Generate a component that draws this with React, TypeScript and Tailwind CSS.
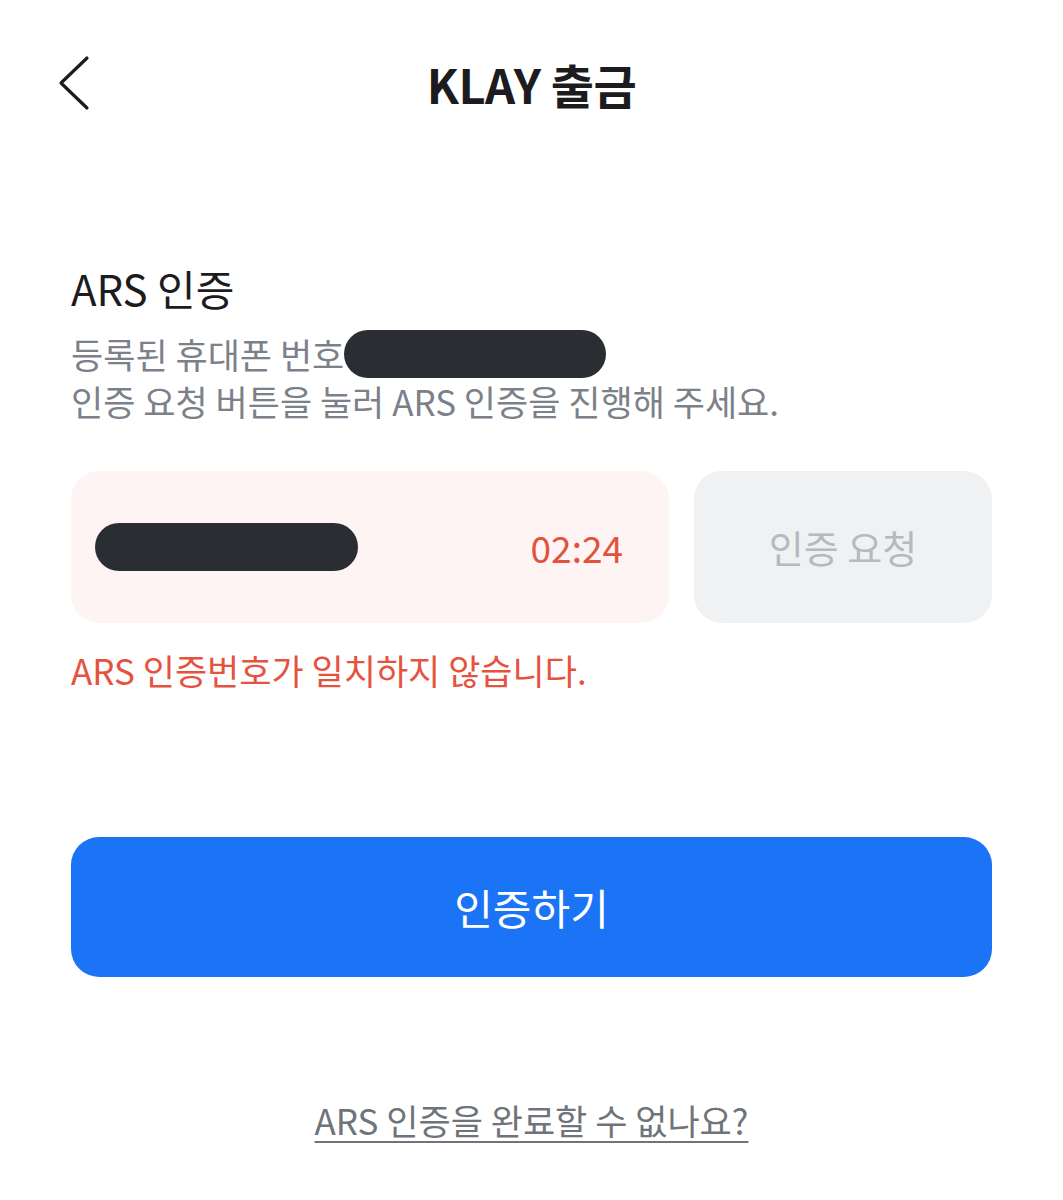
const FONT = { fontFamily: '"Noto Sans CJK KR", "Noto Sans", sans-serif' }

function BackIcon() {
  return (
    <svg width="34" height="56" viewBox="0 0 34 56" fill="none">
      <polyline points="30,3 4,28 30,53" stroke="#1c1c1e" strokeWidth="3.2" strokeLinecap="round" strokeLinejoin="round" />
    </svg>
  )
}

function Redacted({ className }: { className: string }) {
  return <span className={`inline-block shrink-0 rounded-full bg-[#2a2d31] ${className}`} />
}

export default function App() {
  return (
    <div className="min-h-[1200px] w-full bg-white" style={FONT}>
      {/* header */}
      <div className="grid h-[166px] grid-cols-[1fr_auto_1fr] items-center">
        <button className="flex items-center pl-[57px]">
          <BackIcon />
        </button>
        <h1 className="text-[47px] font-bold leading-none tracking-[-0.5px] text-[#1c1c1e]">KLAY 출금</h1>
        <div />
      </div>

      <div className="flex flex-col px-[71px] pt-[98px]">
        <h2 className="text-[42px] leading-[48px] text-[#1c1c1e]">ARS 인증</h2>
        <p className="mt-[18px] text-[35px] leading-[46px] text-[#7c8189]">
          <span className="flex items-center">
            등록된 휴대폰 번호<Redacted className="h-[48px] w-[262px]" />
          </span>
          <span className="block">인증 요청 버튼을 눌러 ARS 인증을 진행해 주세요.</span>
        </p>

        <div className="mt-[47px] flex gap-[25px]">
          <div className="flex h-[152px] flex-1 items-center justify-between rounded-[28px] bg-[#fdf4f3] pl-[24px] pr-[46px]">
            <Redacted className="h-[48px] w-[263px]" />
            <span className="text-[37px] leading-none text-[#e0533f]">02:24</span>
          </div>
          <button className="flex h-[152px] w-[298px] items-center justify-center rounded-[28px] bg-[#f0f1f3] text-[38px] leading-none text-[#b5b9c0]">
            인증 요청
          </button>
        </div>

        <p className="mt-[24px] text-[35px] leading-[46px] text-[#e5533f]">ARS 인증번호가 일치하지 않습니다.</p>

        <button className="mt-[144px] flex h-[140px] items-center justify-center rounded-[28px] bg-[#1a74f5] text-[42px] leading-none text-white">
          인증하기
        </button>

        <div className="mt-[120px] flex justify-center">
          <a className="text-[35px] leading-[46px] text-[#6f747b] underline decoration-[2px] underline-offset-[6px]">
            ARS 인증을 완료할 수 없나요?
          </a>
        </div>
      </div>
    </div>
  )
}
